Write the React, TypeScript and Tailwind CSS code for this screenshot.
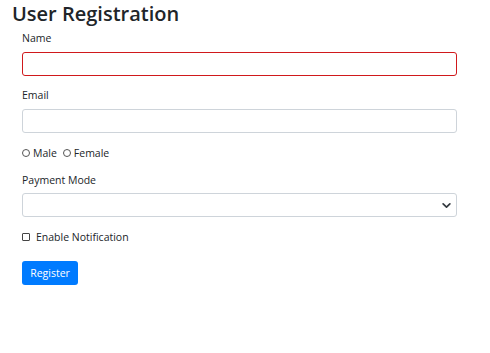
export default function App() {
    const font = { fontFamily: '"Open Sans", "Noto Sans", sans-serif' };

    return (
        <div className="w-[490px] h-[353px] bg-white text-[#212529]" style={font}>
            <h1 className="pl-[12px] pt-[2px] text-[20px] leading-[24px] font-semibold text-[#212529]">
                User Registration
            </h1>

            <form className="pl-[22px] w-[457px]" onSubmit={(e) => e.preventDefault()}>
                <label className="block mt-[5px] mb-[7px] text-[10.5px] leading-[14px]">Name</label>
                <input
                    type="text"
                    className="block w-[435px] h-[24px] rounded-[3px] border border-[#d0191c] bg-white outline-none"
                />

                <label className="block mt-[12px] mb-[7px] text-[10.5px] leading-[14px]">Email</label>
                <input
                    type="email"
                    className="block w-[435px] h-[24px] rounded-[3px] border border-[#ced4da] bg-white outline-none"
                />

                <div className="flex items-center mt-[13px] text-[10.5px] leading-[14px]">
                    <span className="w-[8px] h-[8px] rounded-full border border-[#555] mr-[3px]" />
                    <span className="mr-[6px]">Male</span>
                    <span className="w-[8px] h-[8px] rounded-full border border-[#555] mr-[3px]" />
                    <span>Female</span>
                </div>

                <label className="block mt-[13px] mb-[6px] text-[10.5px] leading-[14px]">Payment Mode</label>
                <div className="relative w-[435px] h-[24px] rounded-[3px] border border-[#ced4da] bg-white">
                    <svg
                        className="absolute right-[5px] top-[8px]"
                        width="9"
                        height="7"
                        viewBox="0 0 16 12"
                        fill="none"
                        stroke="#343a40"
                        strokeWidth="3"
                        strokeLinecap="round"
                        strokeLinejoin="round"
                    >
                        <path d="M2 3l6 6 6-6" />
                    </svg>
                </div>

                <div className="flex items-center mt-[13px] text-[10.5px] leading-[14px]">
                    <span className="w-[8px] h-[8px] rounded-[1px] border border-[#444] mr-[6px]" />
                    <span>Enable Notification</span>
                </div>

                <button
                    type="submit"
                    className="mt-[17px] w-[56px] h-[24px] rounded-[3px] bg-[#007bff] text-white text-[10.5px] leading-[14px]"
                >
                    Register
                </button>
            </form>
        </div>
    );
}
